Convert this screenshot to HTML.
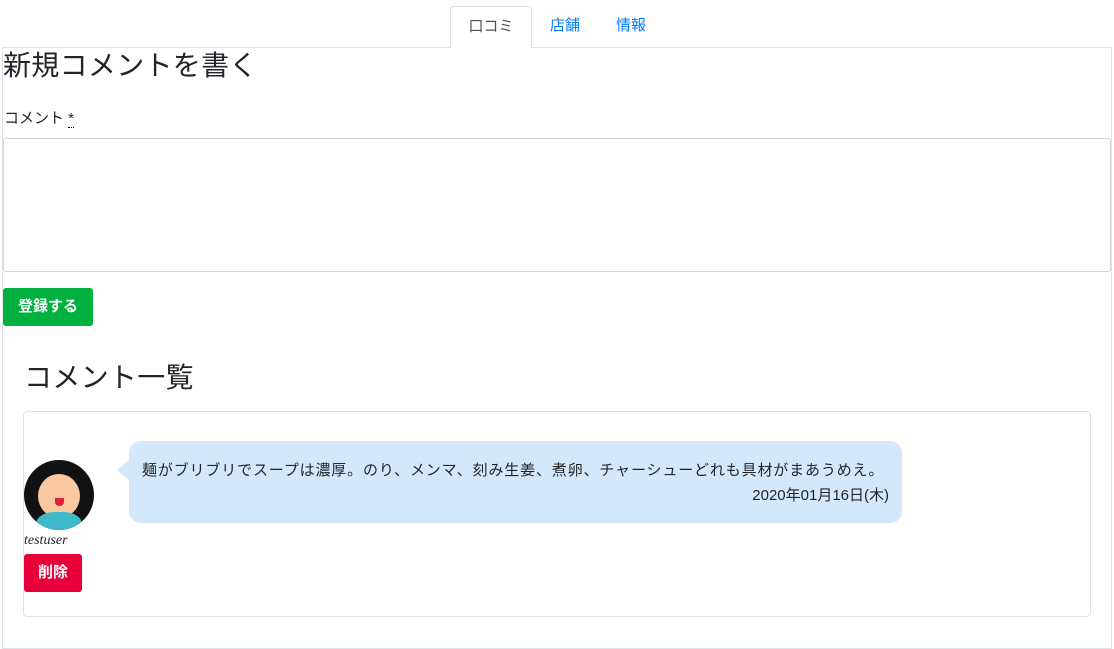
<!DOCTYPE html>
<html><head><meta charset="utf-8"><style>
body{margin:0;width:1114px;height:622px;overflow:hidden;background:#fff;font-family:"Liberation Sans","Noto Sans CJK JP",sans-serif;color:#212529;position:relative}
.a{position:absolute}
.tab{top:6px;height:41px;line-height:40px;font-size:15px;color:#007bff;text-align:center}
</style></head><body>
<div class="a" style="left:2px;top:47px;width:1108px;height:600px;border:1px solid #dee2e6"></div>
<div class="a tab" style="left:450px;width:80px;border:1px solid #dee2e6;border-bottom:1px solid #fff;border-radius:4px 4px 0 0;color:#495057;background:#fff">口コミ</div>
<div class="a tab" style="left:540px;width:50px">店舗</div>
<div class="a tab" style="left:606px;width:50px">情報</div>
<div class="a" style="left:3px;top:47px;font-size:28px;line-height:38px;letter-spacing:0.3px">新規コメントを書く</div>
<div class="a" style="left:4px;top:107px;font-size:15px">コメント <span style="border-bottom:1px dotted #000">*</span></div>
<div class="a" style="left:3px;top:138px;width:1106px;height:132px;border:1px solid #ced4da;border-radius:3px"></div>
<div class="a" style="left:3px;top:288px;width:90px;height:38px;background:#00b140;border-radius:3px;color:#fff;font-size:15px;font-weight:bold;line-height:38px;text-align:center">登録する</div>
<div class="a" style="left:24px;top:359px;font-size:28px;line-height:38px;letter-spacing:0.3px">コメント一覧</div>
<div class="a" style="left:23px;top:411px;width:1066px;height:204px;border:1px solid #dee2e6;border-radius:4px"></div>
<div class="a" style="left:24px;top:460px;width:70px;height:70px;border-radius:50%;background:#111;overflow:hidden">
<div class="a" style="left:14px;top:14px;width:42px;height:44px;border-radius:50%;background:#f9c7a0"></div>
<div class="a" style="left:12px;top:52px;width:46px;height:30px;border-radius:40% 40% 0 0;background:#3fb8c8"></div>
<div class="a" style="left:31px;top:38px;width:9px;height:8px;border-radius:0 0 50% 50%;background:#e0203a"></div>
</div>
<div class="a" style="left:24px;top:533px;font-size:14px;font-style:italic;font-family:'Liberation Serif',serif">testuser</div>
<div class="a" style="left:24px;top:554px;width:58px;height:38px;background:#e8003b;border-radius:3px;color:#fff;font-size:15px;font-weight:bold;line-height:38px;text-align:center">削除</div>
<div class="a" style="left:117px;top:459px;width:0;height:0;border-top:11px solid transparent;border-bottom:11px solid transparent;border-right:13px solid #d4e8fb"></div>
<div class="a" style="left:129px;top:441px;width:773px;height:82px;background:#d4e8fb;border-radius:12px;font-size:15px">
<div class="a" style="left:13px;top:18px;white-space:nowrap;letter-spacing:0.85px">麺がブリブリでスープは濃厚。のり、メンマ、刻み生姜、煮卵、チャーシューどれも具材がまあうめえ。</div>
<div class="a" style="right:13px;top:43px">2020年01月16日(木)</div>
</div>
</body></html>
